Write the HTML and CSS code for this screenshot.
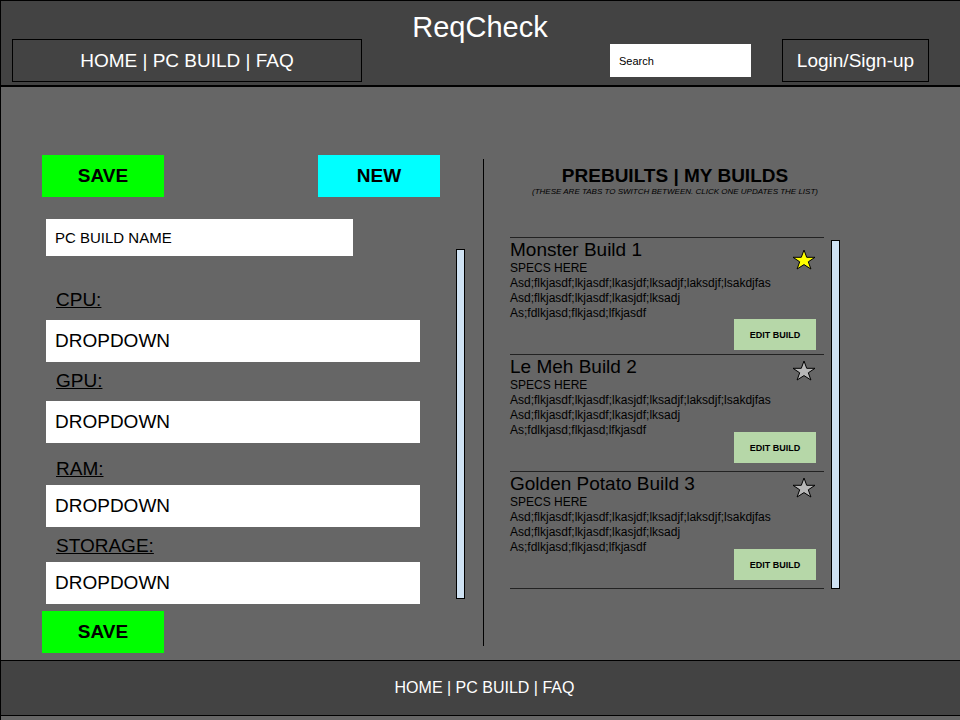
FILE: index.html
```html
<!DOCTYPE html>
<html lang="en">
<head>
<meta charset="utf-8">
<title>ReqCheck</title>
<link rel="stylesheet" href="styles.css">
</head>
<body>
<header class="site-header">
  <nav class="box main-nav"><a href="#">HOME</a> | <a href="#">PC BUILD</a> | <a href="#">FAQ</a></nav>
  <h1 class="brand">ReqCheck</h1>
  <input class="search" type="search" placeholder="Search" aria-label="Search">
  <a class="box" href="#">Login/Sign-up</a>
</header>

<main class="workspace">
  <section class="builder">
    <form class="build-form">
      <div class="actions">
        <button class="button save" type="button">SAVE</button>
        <button class="button new" type="button">NEW</button>
      </div>
      <div class="fields">
        <input class="build-name" type="text" placeholder="PC BUILD NAME" aria-label="PC build name">
        <label for="cpu">CPU:</label>
        <select id="cpu"><option>DROPDOWN</option></select>
        <label for="gpu">GPU:</label>
        <select id="gpu"><option>DROPDOWN</option></select>
        <label class="tight" for="ram">RAM:</label>
        <select id="ram"><option>DROPDOWN</option></select>
        <label class="tight" for="storage">STORAGE:</label>
        <select id="storage"><option>DROPDOWN</option></select>
      </div>
      <button class="button save" type="button">SAVE</button>
    </form>
    <div class="scrollbar"></div>
  </section>

  <section class="library">
    <div class="tabs"><button type="button">PREBUILTS</button> | <button type="button">MY BUILDS</button></div>
    <p class="note">(THESE ARE TABS TO SWITCH BETWEEN. CLICK ONE UPDATES THE LIST)</p>
    <div class="list-area">
      <ul class="builds">
        <li class="build favorite">
          <div class="details">
            <h2>Monster Build 1</h2>
            <p>SPECS HERE<br>Asd;flkjasdf;lkjasdf;lkasjdf;lksadjf;laksdjf;lsakdjfas<br>Asd;flkjasdf;lkjasdf;lkasjdf;lksadj<br>As;fdlkjasd;flkjasd;lfkjasdf</p>
          </div>
          <div class="side">
            <svg class="star" viewBox="0 0 24 21" aria-hidden="true"><path d="M12 1l2.7 7.3H23l-6.7 4.5 2.6 7.2L12 15.6 5.100 20l2.6-7.200L1 8.300h8.300z"/></svg>
            <button class="edit" type="button">EDIT BUILD</button>
          </div>
        </li>
        <li class="build">
          <div class="details">
            <h2>Le Meh Build 2</h2>
            <p>SPECS HERE<br>Asd;flkjasdf;lkjasdf;lkasjdf;lksadjf;laksdjf;lsakdjfas<br>Asd;flkjasdf;lkjasdf;lkasjdf;lksadj<br>As;fdlkjasd;flkjasd;lfkjasdf</p>
          </div>
          <div class="side">
            <svg class="star" viewBox="0 0 24 21" aria-hidden="true"><path d="M12 1l2.7 7.3H23l-6.7 4.5 2.6 7.2L12 15.6 5.100 20l2.6-7.200L1 8.300h8.300z"/></svg>
            <button class="edit" type="button">EDIT BUILD</button>
          </div>
        </li>
        <li class="build">
          <div class="details">
            <h2>Golden Potato Build 3</h2>
            <p>SPECS HERE<br>Asd;flkjasdf;lkjasdf;lkasjdf;lksadjf;laksdjf;lsakdjfas<br>Asd;flkjasdf;lkjasdf;lkasjdf;lksadj<br>As;fdlkjasd;flkjasd;lfkjasdf</p>
          </div>
          <div class="side">
            <svg class="star" viewBox="0 0 24 21" aria-hidden="true"><path d="M12 1l2.7 7.3H23l-6.7 4.5 2.6 7.2L12 15.6 5.100 20l2.6-7.200L1 8.300h8.300z"/></svg>
            <button class="edit" type="button">EDIT BUILD</button>
          </div>
        </li>
      </ul>
      <div class="scrollbar"></div>
    </div>
  </section>
</main>

<footer class="site-footer"><nav><a href="#">HOME</a> | <a href="#">PC BUILD</a> | <a href="#">FAQ</a></nav></footer>
</body>
</html>
```
FILE: styles.css
```css
* {
  box-sizing: border-box;
}

body {
  margin: 0;
  min-height: 100vh;
  padding-bottom: 4px;
  display: flex;
  flex-direction: column;
  border: solid #000;
  border-width: 1px 0 0 1px;
  background: #666;
  color: #000;
  font-family: "Liberation Sans", Arial, sans-serif;
}

h1, h2, p, ul {
  margin: 0;
  padding: 0;
  font-weight: normal;
}

a {
  color: inherit;
  text-decoration: none;
}

button, input, select {
  font-family: inherit;
  color: #000;
  border: 0;
  border-radius: 0;
  margin: 0;
}

input::placeholder {
  color: #000;
  opacity: 1;
}

/* Header */
.site-header {
  display: grid;
  grid-template-columns: 350fr 248fr 172fr 147fr;
  align-items: end;
  padding: 8px 31px 3px 11px;
  border-bottom: 2px solid #000;
  background: #434343;
  color: #fff;
}

.box {
  height: 43px;
  border: 1px solid #000;
  font-size: 19px;
  line-height: 41px;
  text-align: center;
}

.brand {
  align-self: start;
  height: 73px;
  padding-right: 12px;
  font-size: 29px;
  line-height: 36px;
  text-align: center;
}

.search {
  appearance: none;
  width: calc(100% - 31px);
  min-width: 0;
  height: 33px;
  margin-bottom: 5px;
  padding: 0 9px;
  background: #fff;
  font-size: 11px;
}

/* Page body */
.workspace {
  flex: 1;
  display: grid;
  grid-template-columns: 482fr 477fr;
  align-items: start;
  padding: 68px 0 6px;
}

.builder {
  display: flex;
  gap: 16px;
  padding: 0 18px 0 41px;
}

.build-form {
  flex: 1;
}

.actions {
  display: flex;
  justify-content: space-between;
}

.button {
  width: 122px;
  height: 42px;
  padding: 0;
  font-size: 19px;
  font-weight: bold;
}

.save {
  background: #0f0;
}

.new {
  background: #0ff;
}

.fields {
  display: grid;
  grid-template-rows: 37px 64px 42px 39px 42px 42px 42px 35px 42px;
  padding: 22px 20px 7px 4px;
}

.fields label {
  align-self: end;
  padding: 0 10px 8px;
  font-size: 19px;
  line-height: 24px;
  text-decoration: underline;
}

.fields .tight {
  padding-bottom: 4px;
}

.build-name {
  width: 82%;
  padding: 0 9px 1px;
  background: #fff;
  font-size: 15px;
}

.fields select {
  appearance: none;
  width: 100%;
  padding: 0 9px 1px;
  background: #fff;
  font-size: 19px;
}

.scrollbar {
  width: 9px;
  border: 1px solid #000;
  background: #cfe2f3;
}

.builder .scrollbar {
  margin: 94px 0 54px;
}

/* Saved and prebuilt list */
.library {
  align-self: stretch;
  margin: 4px 0 8px;
  padding: 6px 120px 0 26px;
  border-left: 1px solid #000;
}

.tabs {
  font-size: 19px;
  font-weight: bold;
  line-height: 22px;
  text-align: center;
  white-space: nowrap;
}

.tabs button {
  padding: 0;
  background: none;
  font: inherit;
}

.note {
  font-size: 8px;
  font-style: italic;
  line-height: 10px;
  text-align: center;
  white-space: nowrap;
}

.list-area {
  display: flex;
  gap: 7px;
  margin-top: 40px;
}

.list-area .scrollbar {
  margin-top: 3px;
}

.builds {
  flex: 1;
  list-style: none;
  border-bottom: 1px solid #222;
}

.build {
  display: flex;
  height: 117px;
  border-top: 1px solid #222;
}

.details {
  flex: 1;
  width: 0;
  white-space: nowrap;
}

.details h2 {
  font-size: 19px;
  line-height: 23px;
}

.details p {
  font-size: 12px;
  line-height: 15px;
}

.side {
  display: flex;
  flex-direction: column;
  align-items: flex-end;
  justify-content: space-between;
  padding: 5px 8px 8px 0;
}

.favorite .side {
  padding-top: 11px;
  padding-bottom: 4px;
}

.star {
  width: 24px;
  height: 21px;
  fill: #b7b7b7;
  stroke: #000;
  stroke-width: 1;
}

.favorite .star {
  fill: #ff0;
}

.edit {
  width: 82px;
  height: 31px;
  padding: 0;
  background: #b6d7a8;
  font-size: 9px;
  font-weight: bold;
}

/* Footer */
.site-footer {
  padding-left: 8px;
  border: solid #000;
  border-width: 1px 0;
  background: #434343;
  color: #fff;
  font-size: 16px;
  line-height: 54px;
  text-align: center;
}
```
